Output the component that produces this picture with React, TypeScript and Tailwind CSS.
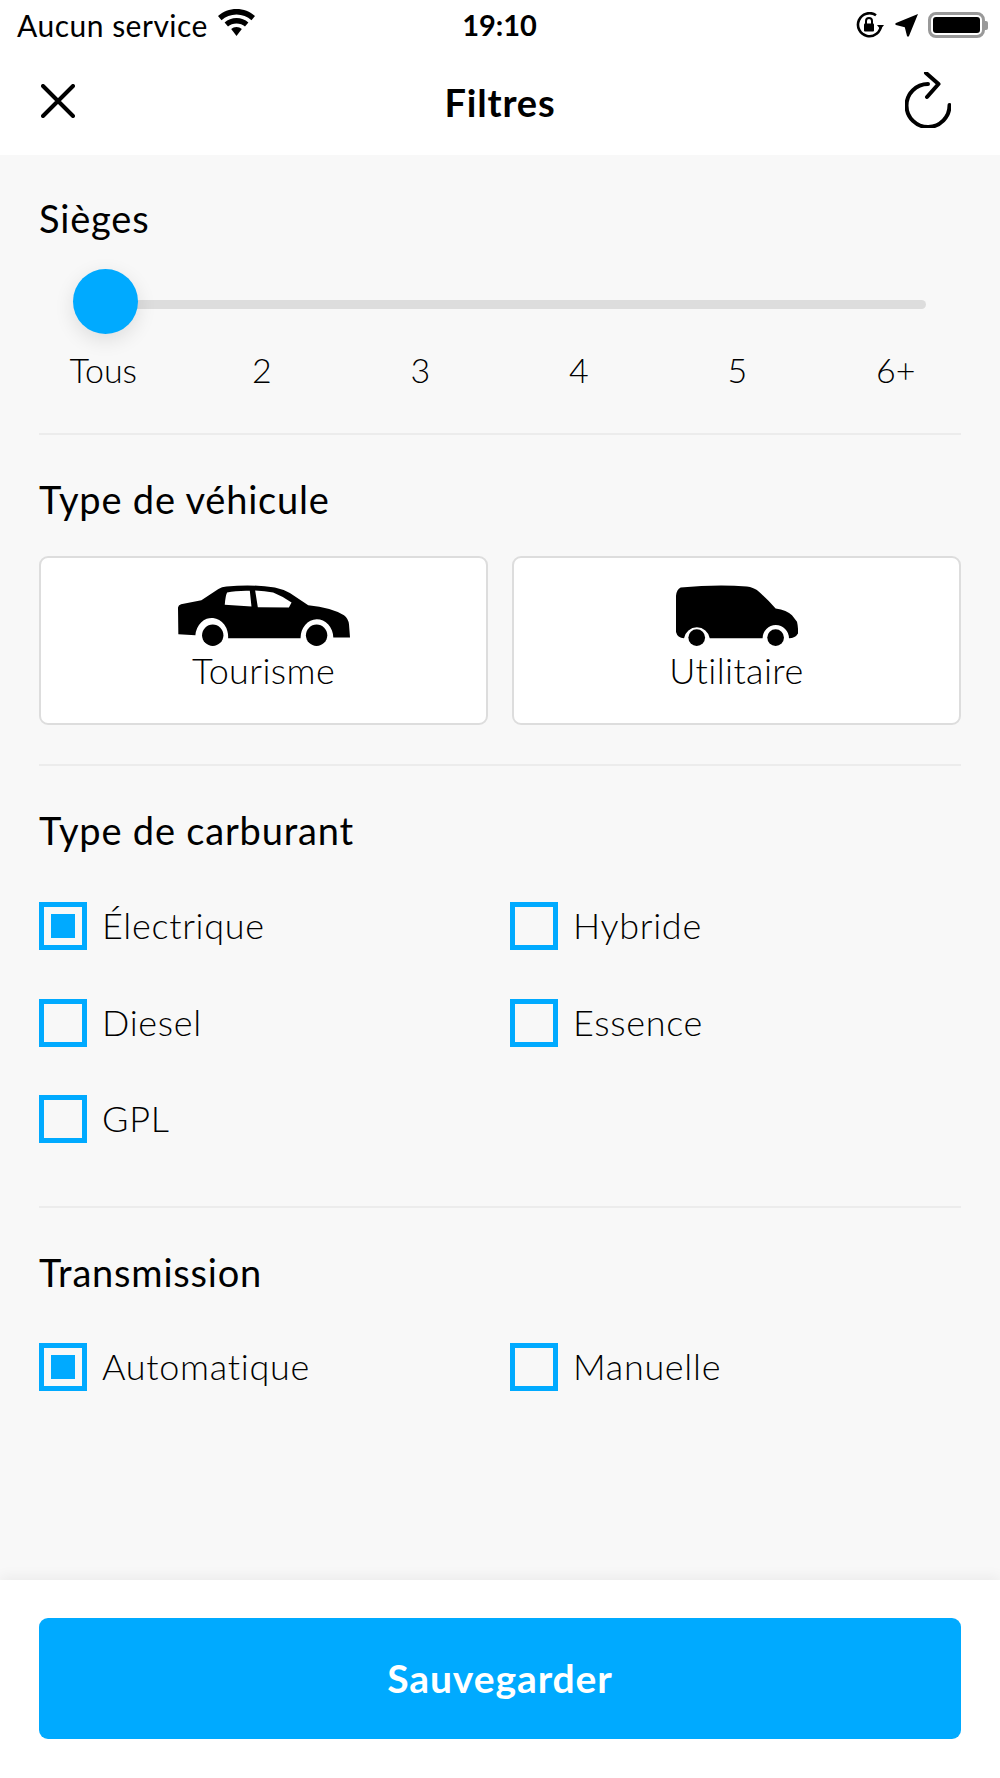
import React from 'react';

const seats = ['Tous', '2', '3', '4', '5', '6+'];

const SectionTitle = ({ children }: { children: React.ReactNode }) => (
  <h2 className="text-[38px] leading-[44px] font-normal tracking-[0.8px] text-black">{children}</h2>
);

const Divider = () => <div className="h-[2px] bg-[#ececec]" />;

const Checkbox = ({ label, checked }: { label: string; checked?: boolean }) => (
  <div className="flex items-center gap-[15px] h-[48px]">
    <div className="w-[48px] h-[48px] border-[5px] border-[#00aaff] flex items-center justify-center shrink-0">
      {checked && <div className="w-[24px] h-[24px] bg-[#00aaff]" />}
    </div>
    <span className="text-[36px] leading-[48px] font-light tracking-[0.7px] text-black -mt-[2px]">{label}</span>
  </div>
);

const CarIcon = () => (
  <svg width="172" height="61" viewBox="475 138 515 182" fill="black">
    <path
      fillRule="evenodd"
      d="M475 205 Q476 197 484 195 L545 183 L596 150 Q606 143 620 142 Q700 135 765 145 Q790 150 810 162 L865 198 Q935 205 972 228 Q985 238 987 255 L990 295 L940 295 A49 56 0 0 0 842 297 L625 297 A49 56 0 0 0 527 288 L476 285 Z M622 160 Q617 170 615 197 L695 202 L690 155 Q650 154 622 160 Z M706 154 L714 204 L807 205 L815 190 Q790 172 760 160 Q735 155 706 154 Z"
    />
    <circle cx="579" cy="288" r="32" />
    <circle cx="890" cy="288" r="32" />
  </svg>
);

const VanIcon = () => (
  <svg width="122" height="61" viewBox="528 138 365 182" fill="black">
    <path d="M528 170 Q530 150 542 145 Q650 135 740 142 Q760 145 770 153 Q800 178 826 208 Q860 213 875 228 L890 248 Q894 265 893 283 Q885 297 866 297 A39 39 0 0 0 787 297 L629 297 A39 39 0 0 0 552 297 Q532 295 528 278 Z" />
    <circle cx="590" cy="295" r="25" />
    <circle cx="826" cy="295" r="25" />
  </svg>
);

const VehicleCard = ({ label, icon }: { label: string; icon: React.ReactNode }) => (
  <div className="flex-1 h-[169px] bg-white border-2 border-[#dddddd] rounded-[9px] flex flex-col items-center pt-[27px]">
    {icon}
    <span className="text-[36px] leading-[44px] font-light tracking-[0.4px] text-black mt-[2px]">{label}</span>
  </div>
);

const StatusBar = () => (
  <div className="h-[50px] mb-[2px] pl-[17px] pr-[12px] flex items-center justify-between text-black">
    <div className="flex items-center gap-[10px] w-[300px]">
      <span className="text-[30px] leading-[32px] tracking-[0.5px]">Aucun service</span>
      <svg width="37" height="28" viewBox="0 0 37 28" fill="black" className="-mt-[4px]">
        <path d="M18.5 0 C11.5 0 5 2.6 0 7 L3.5 11.2 C7.6 7.6 12.8 5.5 18.5 5.5 C24.2 5.5 29.4 7.6 33.5 11.2 L37 7 C32 2.6 25.5 0 18.5 0 Z" />
        <path d="M18.5 9 C14 9 9.8 10.7 6.6 13.5 L10 17.6 C12.2 15.6 15.2 14.4 18.5 14.4 C21.8 14.4 24.8 15.6 27 17.6 L30.4 13.5 C27.2 10.7 23 9 18.5 9 Z" />
        <path d="M18.5 18 C16.5 18 14.6 18.7 13.2 20 L18.5 27 L23.8 20 C22.4 18.7 20.5 18 18.5 18 Z" />
      </svg>
    </div>
    <span className="text-[29px] leading-[32px] font-bold mr-[6px]">19:10</span>
    <div className="flex items-center justify-end gap-[10px] w-[300px]">
      <svg width="28" height="26" viewBox="0 0 28 26" fill="none" className="mr-[1px]">
        <path d="M25 13 A11.5 11.5 0 1 1 20 3.2" stroke="black" strokeWidth="2.6" />
        <path d="M21 13 L28 13 L24.5 17.5 Z" fill="black" />
        <rect x="8" y="11.5" width="10" height="8" rx="1" fill="black" />
        <path d="M10 12 V9 A3 3 0 0 1 16 9 V12" stroke="black" strokeWidth="2" />
      </svg>
      <svg width="23" height="23" viewBox="0 0 23 23" fill="black">
        <path d="M23 0 L14 22 Q13 23.5 12 22 L9.8 13.2 L1 11 Q-0.5 10 1 9 Z" />
      </svg>
      <div className="flex items-center">
        <div className="w-[57px] h-[26px] border-[3px] border-[#999999] rounded-[8px] p-[2px]">
          <div className="w-full h-full bg-black rounded-[3px]" />
        </div>
        <div className="w-[3px] h-[9px] bg-[#999999] rounded-r-[2px]" />
      </div>
    </div>
  </div>
);

const Header = () => (
  <div className="h-[103px] bg-white flex items-center justify-between pl-[41px] pr-[49px]">
    <svg width="34" height="34" viewBox="0 0 34 34" fill="none" stroke="black" strokeWidth="4" strokeLinecap="round" className="-mt-[5px]">
      <path d="M2 2 L32 32 M32 2 L2 32" />
    </svg>
    <h1 className="text-[38px] leading-[44px] font-bold tracking-[0.8px] text-black -mt-[4px] ml-[20px]">Filtres</h1>
    <svg width="46" height="56" viewBox="0 0 46 56" fill="none" stroke="black" strokeWidth="4" strokeLinecap="round" strokeLinejoin="round" className="-mt-[8px]">
      <path d="M23 12 A21.5 21.5 0 1 0 44.5 33" />
      <path d="M21 1 L33.5 12 L22 25" />
    </svg>
  </div>
);

export default function App() {
  return (
    <div className="w-[1000px] h-[1778px] flex flex-col bg-white [font-family:Lato,sans-serif]">
      <StatusBar />
      <Header />

      <main className="flex-1 bg-[#f8f8f8] px-[39px] pt-[41px]">
        <SectionTitle>Sièges</SectionTitle>
        <div className="relative h-[66px] mt-[29px]">
          <div className="absolute left-[66px] right-[35px] top-[31px] h-[9px] rounded-full bg-[#dddddd]" />
          <div className="absolute left-[34px] top-0 w-[65px] h-[65px] rounded-full bg-[#00aaff] shadow-[0_6px_20px_rgba(0,0,0,0.11)]" />
        </div>
        <div className="flex mt-[13px] ml-[-15px] mr-[-14px] text-[34px] leading-[44px] font-light text-black">
          {seats.map((s) => (
            <span key={s} className="w-[158.6px] text-center">{s}</span>
          ))}
        </div>

        <div className="mt-[41px]"><Divider /></div>

        <div className="mt-[42px]"><SectionTitle>Type de véhicule</SectionTitle></div>
        <div className="flex gap-[24px] mt-[35px]">
          <VehicleCard label="Tourisme" icon={<CarIcon />} />
          <VehicleCard label="Utilitaire" icon={<VanIcon />} />
        </div>

        <div className="mt-[39px]"><Divider /></div>

        <div className="mt-[42px]"><SectionTitle>Type de carburant</SectionTitle></div>
        <div className="grid grid-cols-[471px_1fr] gap-y-[48.5px] mt-[50px]">
          <Checkbox label="Électrique" checked />
          <Checkbox label="Hybride" />
          <Checkbox label="Diesel" />
          <Checkbox label="Essence" />
          <Checkbox label="GPL" />
        </div>

        <div className="mt-[63px]"><Divider /></div>

        <div className="mt-[42px]"><SectionTitle>Transmission</SectionTitle></div>
        <div className="grid grid-cols-[471px_1fr] mt-[49px]">
          <Checkbox label="Automatique" checked />
          <Checkbox label="Manuelle" />
        </div>
      </main>

      <footer className="relative h-[198px] bg-white px-[39px] pt-[38px] shadow-[0_-4px_12px_rgba(0,0,0,0.05)]">
        <button className="w-full h-[121px] rounded-[9px] bg-[#00aaff] text-white text-[39px] font-bold tracking-[0.9px]">
          Sauvegarder
        </button>
      </footer>
    </div>
  );
}
